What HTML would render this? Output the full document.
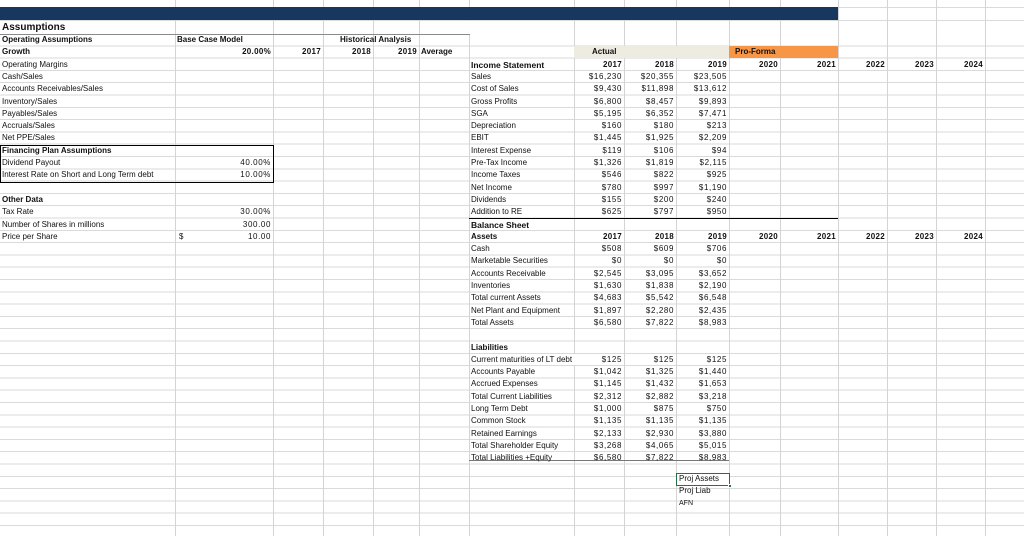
<!DOCTYPE html>
<html><head><meta charset="utf-8"><style>
*{margin:0;padding:0;box-sizing:border-box}
body{width:1024px;height:536px;overflow:hidden;background:#fff;position:relative;font-family:"Liberation Sans",sans-serif;font-size:8px;color:#111}
.h{position:absolute;left:0;top:34px;width:1024px;height:502px;background:repeating-linear-gradient(to bottom,transparent 0,transparent 11.3px,#dadada 11.3px,#dadada 12.3px)}
.v{position:absolute;top:0;width:1px;height:536px;background:#d4d4d4}
.t{position:absolute;height:12.3px;line-height:12.3px;white-space:nowrap;overflow:visible;padding:0 2px}
.r{text-align:right;letter-spacing:0.6px}
.b{font-weight:bold}
.b.r{letter-spacing:0.3px}
</style></head><body>
<div class="h"></div>
<div style="position:absolute;left:0;top:20px;width:1024px;height:1px;background:#dadada"></div>
<div style="position:absolute;left:0;top:6.5px;width:1024px;height:1px;background:#dadada"></div>
<div class="v" style="left:175px"></div><div class="v" style="left:273px"></div><div class="v" style="left:323px"></div><div class="v" style="left:373px"></div><div class="v" style="left:419px"></div><div class="v" style="left:469px"></div><div class="v" style="left:574px"></div><div class="v" style="left:624px"></div><div class="v" style="left:676px"></div><div class="v" style="left:729px"></div><div class="v" style="left:780px"></div><div class="v" style="left:838px"></div><div class="v" style="left:887px"></div><div class="v" style="left:936px"></div><div class="v" style="left:985px"></div>
<div style="position:absolute;left:0;top:7px;width:838px;height:13px;background:#17375e"></div>
<div style="position:absolute;left:0;top:21px;width:470px;height:13px;background:#fff"></div>
<div class="v" style="left:175px;top:21px;height:13px"></div><div class="v" style="left:273px;top:21px;height:13px"></div><div class="v" style="left:323px;top:21px;height:13px"></div><div class="v" style="left:373px;top:21px;height:13px"></div><div class="v" style="left:419px;top:21px;height:13px"></div>
<div class="t b" style="left:0;top:21px;height:13px;line-height:13px;font-size:10px">Assumptions</div>
<div style="position:absolute;left:0;top:33.5px;width:470px;height:1px;background:#8a8a8a"></div>
<div style="position:absolute;left:574px;top:46.3px;width:155px;height:12px;background:#eeece1"></div>
<div style="position:absolute;left:729px;top:46.3px;width:109px;height:12px;background:#f79646"></div>
<div class="t b" style="left:590px;top:46.3px">Actual</div>
<div class="t b" style="left:733px;top:46.3px">Pro-Forma</div>
<div style="position:absolute;left:0;top:144.7px;width:274px;height:38px;border:1.3px solid #000"></div>
<div style="position:absolute;left:469px;top:218px;width:369px;height:1.3px;background:#000"></div>
<div style="position:absolute;left:469px;top:459.8px;width:260px;height:1px;background:#777"></div>
<div class="t b" style="left:0;top:34px">Operating Assumptions</div>
<div class="t b" style="left:175px;top:34px">Base Case Model</div>
<div class="t b" style="left:338px;top:34px">Historical Analysis</div>
<div class="t b" style="left:0;top:46.3px">Growth</div>
<div class="t b r" style="left:175px;width:98px;top:46.3px">20.00%</div>
<div class="t b r" style="left:273px;width:50px;top:46.3px">2017</div>
<div class="t b r" style="left:323px;width:50px;top:46.3px">2018</div>
<div class="t b r" style="left:373px;width:46px;top:46.3px">2019</div>
<div class="t b" style="left:419px;top:46.3px">Average</div>
<div class="t" style="left:0;top:58.6px">Operating Margins</div>
<div class="t" style="left:0;top:70.9px">Cash/Sales</div>
<div class="t" style="left:0;top:83.2px">Accounts Receivables/Sales</div>
<div class="t" style="left:0;top:95.5px">Inventory/Sales</div>
<div class="t" style="left:0;top:107.8px">Payables/Sales</div>
<div class="t" style="left:0;top:120.1px">Accruals/Sales</div>
<div class="t" style="left:0;top:132.4px">Net PPE/Sales</div>
<div class="t b" style="left:0;top:144.7px">Financing Plan Assumptions</div>
<div class="t" style="left:0;top:157px">Dividend Payout</div>
<div class="t r" style="left:175px;width:98px;top:157px">40.00%</div>
<div class="t" style="left:0;top:169.3px">Interest Rate on Short and Long Term debt</div>
<div class="t r" style="left:175px;width:98px;top:169.3px">10.00%</div>
<div class="t b" style="left:0;top:193.9px">Other Data</div>
<div class="t" style="left:0;top:206.2px">Tax Rate</div>
<div class="t r" style="left:175px;width:98px;top:206.2px">30.00%</div>
<div class="t" style="left:0;top:218.5px">Number of Shares in millions</div>
<div class="t r" style="left:175px;width:98px;top:218.5px">300.00</div>
<div class="t" style="left:0;top:230.8px">Price per Share</div>
<div class="t" style="left:177px;top:230.8px">$</div>
<div class="t r" style="left:175px;width:98px;top:230.8px">10.00</div>
<div class="t b" style="left:469px;top:58.6px;font-size:8.5px">Income Statement</div>
<div class="t b r" style="left:574px;width:50px;top:58.6px">2017</div><div class="t b r" style="left:624px;width:52px;top:58.6px">2018</div><div class="t b r" style="left:676px;width:53px;top:58.6px">2019</div><div class="t b r" style="left:729px;width:51px;top:58.6px">2020</div><div class="t b r" style="left:780px;width:58px;top:58.6px">2021</div><div class="t b r" style="left:838px;width:49px;top:58.6px">2022</div><div class="t b r" style="left:887px;width:49px;top:58.6px">2023</div><div class="t b r" style="left:936px;width:49px;top:58.6px">2024</div>
<div class="t" style="left:469px;top:70.9px">Sales</div><div class="t r" style="left:574px;width:50px;top:70.9px">$16,230</div><div class="t r" style="left:624px;width:52px;top:70.9px">$20,355</div><div class="t r" style="left:676px;width:53px;top:70.9px">$23,505</div>
<div class="t" style="left:469px;top:83.2px">Cost of Sales</div><div class="t r" style="left:574px;width:50px;top:83.2px">$9,430</div><div class="t r" style="left:624px;width:52px;top:83.2px">$11,898</div><div class="t r" style="left:676px;width:53px;top:83.2px">$13,612</div>
<div class="t" style="left:469px;top:95.5px">Gross Profits</div><div class="t r" style="left:574px;width:50px;top:95.5px">$6,800</div><div class="t r" style="left:624px;width:52px;top:95.5px">$8,457</div><div class="t r" style="left:676px;width:53px;top:95.5px">$9,893</div>
<div class="t" style="left:469px;top:107.8px">SGA</div><div class="t r" style="left:574px;width:50px;top:107.8px">$5,195</div><div class="t r" style="left:624px;width:52px;top:107.8px">$6,352</div><div class="t r" style="left:676px;width:53px;top:107.8px">$7,471</div>
<div class="t" style="left:469px;top:120.1px">Depreciation</div><div class="t r" style="left:574px;width:50px;top:120.1px">$160</div><div class="t r" style="left:624px;width:52px;top:120.1px">$180</div><div class="t r" style="left:676px;width:53px;top:120.1px">$213</div>
<div class="t" style="left:469px;top:132.4px">EBIT</div><div class="t r" style="left:574px;width:50px;top:132.4px">$1,445</div><div class="t r" style="left:624px;width:52px;top:132.4px">$1,925</div><div class="t r" style="left:676px;width:53px;top:132.4px">$2,209</div>
<div class="t" style="left:469px;top:144.7px">Interest Expense</div><div class="t r" style="left:574px;width:50px;top:144.7px">$119</div><div class="t r" style="left:624px;width:52px;top:144.7px">$106</div><div class="t r" style="left:676px;width:53px;top:144.7px">$94</div>
<div class="t" style="left:469px;top:157px">Pre-Tax Income</div><div class="t r" style="left:574px;width:50px;top:157px">$1,326</div><div class="t r" style="left:624px;width:52px;top:157px">$1,819</div><div class="t r" style="left:676px;width:53px;top:157px">$2,115</div>
<div class="t" style="left:469px;top:169.3px">Income Taxes</div><div class="t r" style="left:574px;width:50px;top:169.3px">$546</div><div class="t r" style="left:624px;width:52px;top:169.3px">$822</div><div class="t r" style="left:676px;width:53px;top:169.3px">$925</div>
<div class="t" style="left:469px;top:181.6px">Net Income</div><div class="t r" style="left:574px;width:50px;top:181.6px">$780</div><div class="t r" style="left:624px;width:52px;top:181.6px">$997</div><div class="t r" style="left:676px;width:53px;top:181.6px">$1,190</div>
<div class="t" style="left:469px;top:193.9px">Dividends</div><div class="t r" style="left:574px;width:50px;top:193.9px">$155</div><div class="t r" style="left:624px;width:52px;top:193.9px">$200</div><div class="t r" style="left:676px;width:53px;top:193.9px">$240</div>
<div class="t" style="left:469px;top:206.2px">Addition to RE</div><div class="t r" style="left:574px;width:50px;top:206.2px">$625</div><div class="t r" style="left:624px;width:52px;top:206.2px">$797</div><div class="t r" style="left:676px;width:53px;top:206.2px">$950</div>
<div class="t b" style="left:469px;top:218.5px;font-size:8.5px">Balance Sheet</div>
<div class="t b" style="left:469px;top:230.8px">Assets</div>
<div class="t b r" style="left:574px;width:50px;top:230.8px">2017</div><div class="t b r" style="left:624px;width:52px;top:230.8px">2018</div><div class="t b r" style="left:676px;width:53px;top:230.8px">2019</div><div class="t b r" style="left:729px;width:51px;top:230.8px">2020</div><div class="t b r" style="left:780px;width:58px;top:230.8px">2021</div><div class="t b r" style="left:838px;width:49px;top:230.8px">2022</div><div class="t b r" style="left:887px;width:49px;top:230.8px">2023</div><div class="t b r" style="left:936px;width:49px;top:230.8px">2024</div>
<div class="t" style="left:469px;top:243.1px">Cash</div><div class="t r" style="left:574px;width:50px;top:243.1px">$508</div><div class="t r" style="left:624px;width:52px;top:243.1px">$609</div><div class="t r" style="left:676px;width:53px;top:243.1px">$706</div>
<div class="t" style="left:469px;top:255.4px">Marketable Securities</div><div class="t r" style="left:574px;width:50px;top:255.4px">$0</div><div class="t r" style="left:624px;width:52px;top:255.4px">$0</div><div class="t r" style="left:676px;width:53px;top:255.4px">$0</div>
<div class="t" style="left:469px;top:267.7px">Accounts Receivable</div><div class="t r" style="left:574px;width:50px;top:267.7px">$2,545</div><div class="t r" style="left:624px;width:52px;top:267.7px">$3,095</div><div class="t r" style="left:676px;width:53px;top:267.7px">$3,652</div>
<div class="t" style="left:469px;top:280px">Inventories</div><div class="t r" style="left:574px;width:50px;top:280px">$1,630</div><div class="t r" style="left:624px;width:52px;top:280px">$1,838</div><div class="t r" style="left:676px;width:53px;top:280px">$2,190</div>
<div class="t" style="left:469px;top:292.3px">Total current Assets</div><div class="t r" style="left:574px;width:50px;top:292.3px">$4,683</div><div class="t r" style="left:624px;width:52px;top:292.3px">$5,542</div><div class="t r" style="left:676px;width:53px;top:292.3px">$6,548</div>
<div class="t" style="left:469px;top:304.6px">Net Plant and Equipment</div><div class="t r" style="left:574px;width:50px;top:304.6px">$1,897</div><div class="t r" style="left:624px;width:52px;top:304.6px">$2,280</div><div class="t r" style="left:676px;width:53px;top:304.6px">$2,435</div>
<div class="t" style="left:469px;top:316.9px">Total Assets</div><div class="t r" style="left:574px;width:50px;top:316.9px">$6,580</div><div class="t r" style="left:624px;width:52px;top:316.9px">$7,822</div><div class="t r" style="left:676px;width:53px;top:316.9px">$8,983</div>
<div class="t b" style="left:469px;top:341.5px">Liabilities</div>
<div style="position:absolute;left:572px;top:354px;width:3px;height:11px;background:#fff"></div>
<div class="t" style="left:469px;top:353.8px">Current maturities of LT debt</div><div class="t r" style="left:574px;width:50px;top:353.8px">$125</div><div class="t r" style="left:624px;width:52px;top:353.8px">$125</div><div class="t r" style="left:676px;width:53px;top:353.8px">$125</div>
<div class="t" style="left:469px;top:366.1px">Accounts Payable</div><div class="t r" style="left:574px;width:50px;top:366.1px">$1,042</div><div class="t r" style="left:624px;width:52px;top:366.1px">$1,325</div><div class="t r" style="left:676px;width:53px;top:366.1px">$1,440</div>
<div class="t" style="left:469px;top:378.4px">Accrued Expenses</div><div class="t r" style="left:574px;width:50px;top:378.4px">$1,145</div><div class="t r" style="left:624px;width:52px;top:378.4px">$1,432</div><div class="t r" style="left:676px;width:53px;top:378.4px">$1,653</div>
<div class="t" style="left:469px;top:390.7px">Total Current Liabilities</div><div class="t r" style="left:574px;width:50px;top:390.7px">$2,312</div><div class="t r" style="left:624px;width:52px;top:390.7px">$2,882</div><div class="t r" style="left:676px;width:53px;top:390.7px">$3,218</div>
<div class="t" style="left:469px;top:403px">Long Term Debt</div><div class="t r" style="left:574px;width:50px;top:403px">$1,000</div><div class="t r" style="left:624px;width:52px;top:403px">$875</div><div class="t r" style="left:676px;width:53px;top:403px">$750</div>
<div class="t" style="left:469px;top:415.3px">Common Stock</div><div class="t r" style="left:574px;width:50px;top:415.3px">$1,135</div><div class="t r" style="left:624px;width:52px;top:415.3px">$1,135</div><div class="t r" style="left:676px;width:53px;top:415.3px">$1,135</div>
<div class="t" style="left:469px;top:427.6px">Retained Earnings</div><div class="t r" style="left:574px;width:50px;top:427.6px">$2,133</div><div class="t r" style="left:624px;width:52px;top:427.6px">$2,930</div><div class="t r" style="left:676px;width:53px;top:427.6px">$3,880</div>
<div class="t" style="left:469px;top:439.9px">Total Shareholder Equity</div><div class="t r" style="left:574px;width:50px;top:439.9px">$3,268</div><div class="t r" style="left:624px;width:52px;top:439.9px">$4,065</div><div class="t r" style="left:676px;width:53px;top:439.9px">$5,015</div>
<div class="t" style="left:469px;top:452.2px;line-height:11px">Total Liabilities +Equity</div><div class="t r" style="left:574px;width:50px;top:452.2px;line-height:11px">$6,580</div><div class="t r" style="left:624px;width:52px;top:452.2px;line-height:11px">$7,822</div><div class="t r" style="left:676px;width:53px;top:452.2px;line-height:11px">$8,983</div>
<div style="position:absolute;left:676px;top:472.5px;width:54px;height:13px;border:1.5px solid #217346;background:#fff"></div>
<div style="position:absolute;left:728px;top:483.5px;width:4px;height:4px;background:#217346;border:1px solid #fff"></div>
<div class="t" style="left:677px;top:473px">Proj Assets</div>
<div class="t" style="left:677px;top:485.3px">Proj Liab</div>
<div class="t" style="left:677px;top:497.6px;font-size:7px">AFN</div>
</body></html>
